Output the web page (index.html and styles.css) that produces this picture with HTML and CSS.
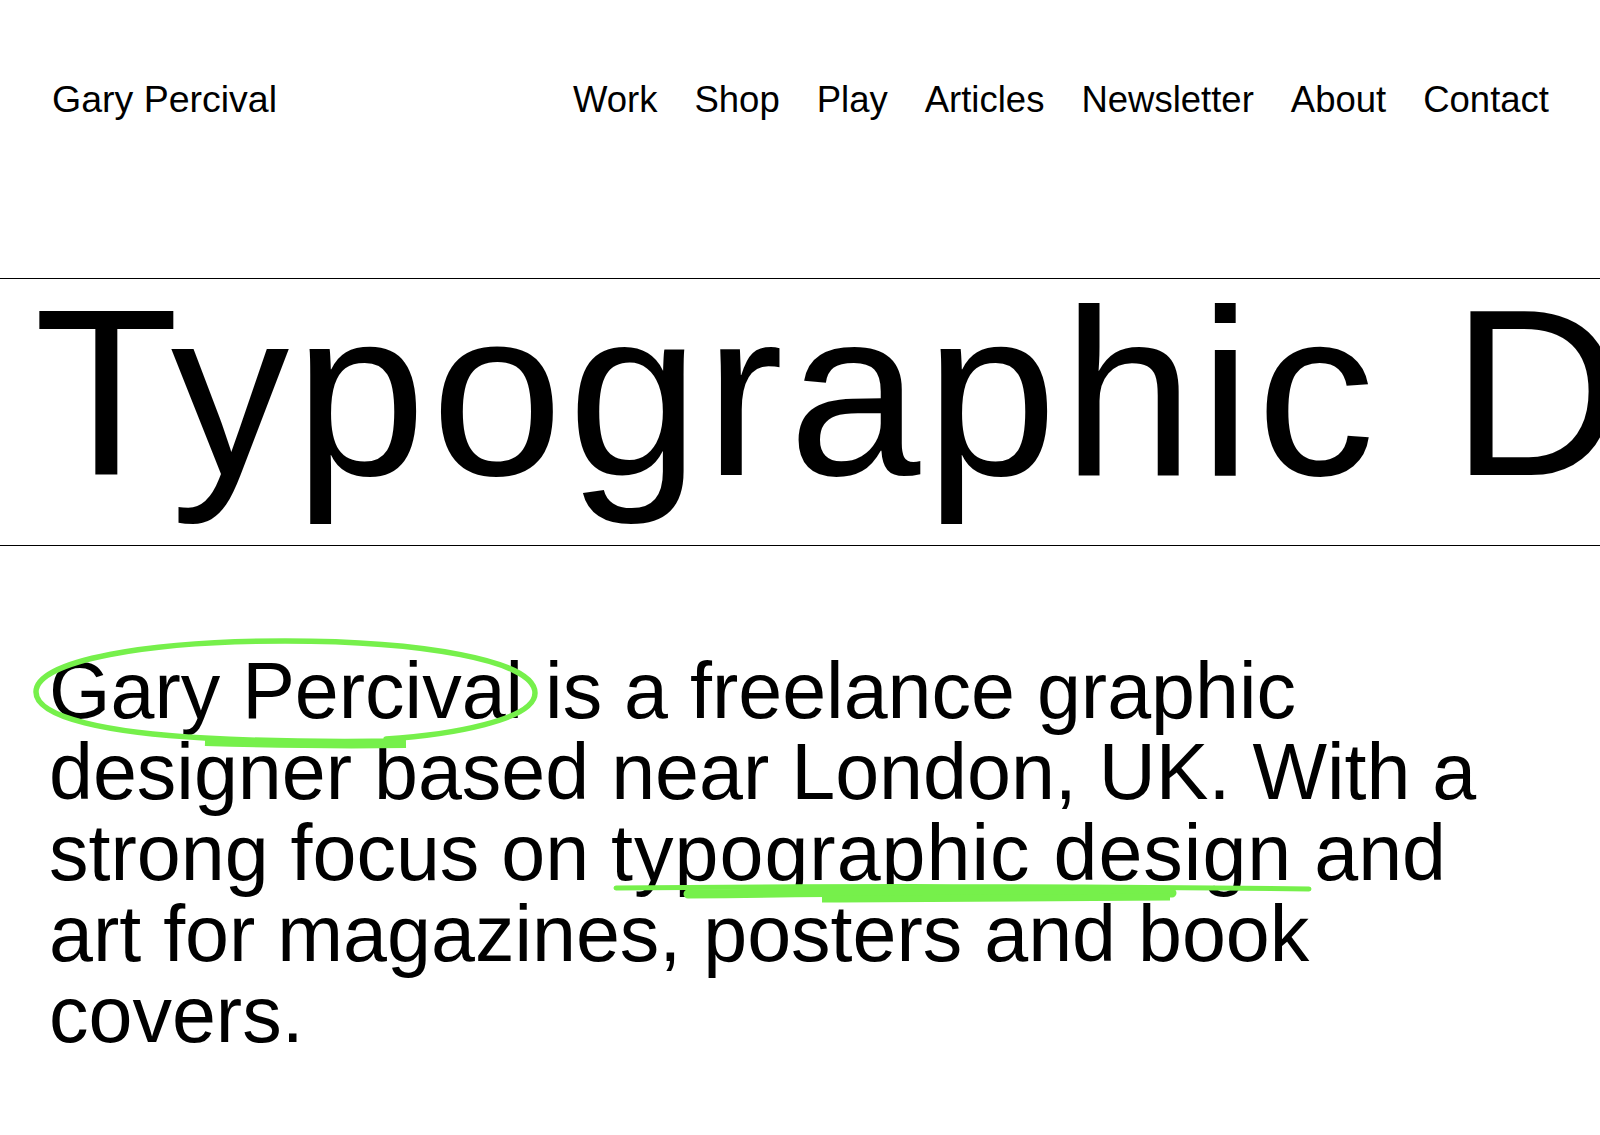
FILE: index.html
```html
<!DOCTYPE html>
<html lang="en">
<head>
<meta charset="utf-8">
<title>Gary Percival</title>
<link rel="stylesheet" href="styles.css">
</head>
<body>
<header class="site-header">
  <a class="logo" href="#">Gary Percival</a>
  <nav class="nav">
    <a href="#">Work</a>
    <a href="#">Shop</a>
    <a href="#">Play</a>
    <a href="#">Articles</a>
    <a href="#">Newsletter</a>
    <a href="#">About</a>
    <a href="#">Contact</a>
  </nav>
</header>

<section class="hero">
  <div class="hero-text">Typographic Design</div>
</section>

<section class="intro">
  <p><span class="hl-name">Gary Percival</span> is a freelance graphic designer based near London, UK. With a strong focus on <span class="hl-under">typographic design</span> and art for magazines, posters and book covers.</p>
</section>

<svg class="marks" viewBox="0 0 1600 1135" aria-hidden="true">
  <g fill="none" stroke="#76f04b" stroke-linecap="round" stroke-linejoin="round">
    <path stroke-width="5.5" d="M386 739 C 450 735, 535 720, 535 693 C 535 660, 420 641, 285 641 C 150 641, 36 660, 36 692 C 36 718, 110 733, 205 738 C 260 741, 330 742, 400 741"/>
    <path stroke-width="8" stroke-linecap="butt" d="M205 742 C 270 744, 340 745, 406 744"/>
    <path stroke-width="5" d="M616 888 C 800 886, 1100 886, 1309 889"/>
    <path stroke-width="9" d="M688 894 C 850 892, 1050 891, 1172 893"/>
    <path stroke-width="7" stroke-linecap="butt" d="M822 899 C 950 899, 1080 898, 1170 897"/>
  </g>
</svg>
</body>
</html>
```

FILE: styles.css
```css
html, body {
  margin: 0;
  padding: 0;
  overflow: hidden;
  background: #ffffff;
}

body {
  position: relative;
  color: #000000;
  font-family: "Liberation Sans", Arial, Helvetica, sans-serif;
}

a {
  color: inherit;
  text-decoration: none;
}

.site-header {
  display: flex;
  justify-content: space-between;
  align-items: baseline;
  padding: 78px 51px 0 52px;
  font-size: 36.5px;
  line-height: 42px;
}

.logo {
  font-size: 37.5px;
}

.nav {
  display: flex;
  gap: 37px;
}

.hero {
  margin-top: 157px;
  border-top: 1px solid #000000;
  border-bottom: 1px solid #000000;
  overflow: hidden;
}

.hero-text {
  white-space: nowrap;
  font-size: 237px;
  letter-spacing: 5px;
  line-height: 220px;
  padding: 4px 0 42px 34px;
}

.intro {
  margin-top: 104px;
  padding-left: 49px;
}

.intro p {
  margin: 0;
  max-width: 1460px;
  font-size: 79px;
  line-height: 81px;
}

.hl-under {
  letter-spacing: 1px;
}

.marks {
  position: absolute;
  left: 0;
  top: 0;
  width: 1600px;
  height: 1135px;
  pointer-events: none;
}
```
